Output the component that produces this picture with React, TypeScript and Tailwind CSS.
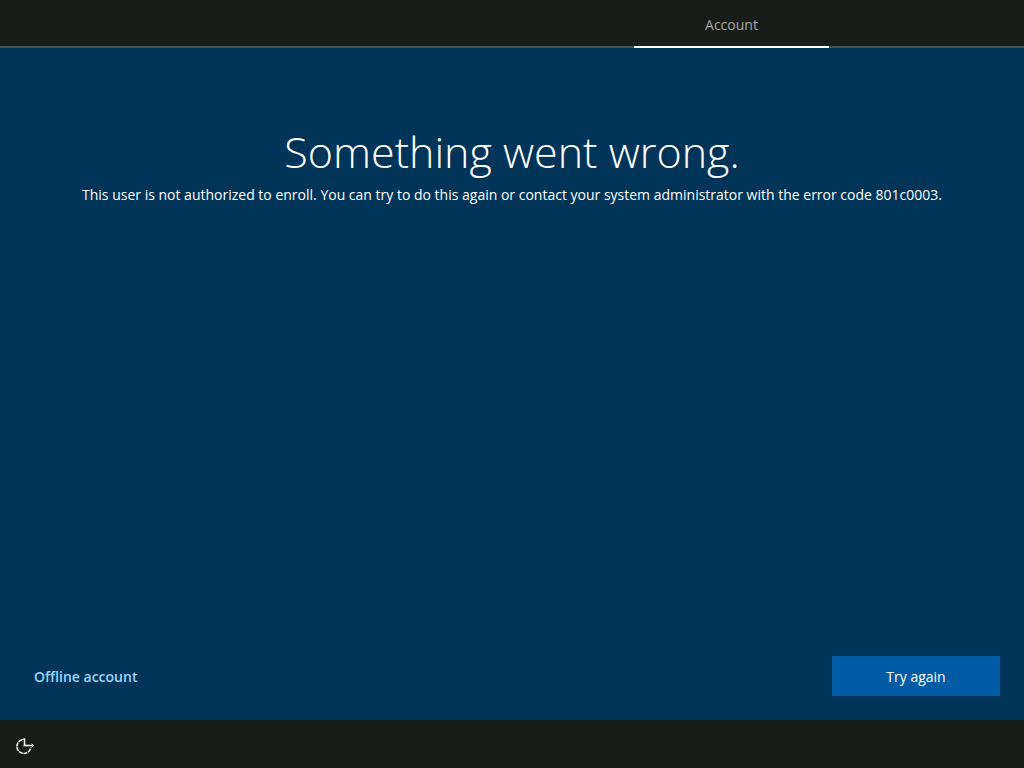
function EaseOfAccessIcon() {
  return (
    <svg width="20" height="20" viewBox="0 0 20 20" fill="none" stroke="white" strokeWidth="1.5" aria-hidden="true">
      <path d="M7 3.7A7 7 0 1 0 15.8 11.6" strokeDasharray="4 0.8" />
      <path d="M9.5 2.5V10M8.5 9.5H18.5" />
      <path d="M7.2 3.8L9.5 2.5M16.6 7.6L18.5 9.5L16.6 11.4" strokeWidth="1" />
    </svg>
  )
}

export default function App() {
  return (
    <div className="flex min-h-screen flex-col bg-[#003459] font-['Open_Sans','Noto_Sans',sans-serif] text-[14px] leading-[22px] text-white">
      <header className="flex h-12 justify-end bg-[#191d19]">
        <div className="flex-1 border-b-2 border-[#4c4c4a]" />
        <button type="button" className="w-[195px] border-b-2 border-white pt-1 text-[#a3a5a3]">
          Account
        </button>
        <div className="w-[195px] border-b-2 border-[#4c4c4a]" />
      </header>

      <main className="flex flex-1 flex-col">
        <div className="flex-1 px-6 pt-[72px] text-center">
          <h1 className="text-[43px] font-light leading-[64px]">Something went wrong.</h1>
          <p>
            This user is not authorized to enroll. You can try to do this again or contact your system administrator
            with the error code 801c0003.
          </p>
        </div>

        <div className="flex items-center justify-between pb-6 pl-[34px] pr-6">
          <a href="#offline" className="pt-0.5 font-semibold text-[#99d4ff]">
            Offline account
          </a>
          <button type="button" className="h-10 w-[168px] bg-[#005ba4] pt-0.5">
            Try again
          </button>
        </div>
      </main>

      <footer className="flex h-12 items-center bg-[#191d19] px-[15px] pt-1">
        <button type="button" aria-label="Ease of access">
          <EaseOfAccessIcon />
        </button>
      </footer>
    </div>
  )
}
